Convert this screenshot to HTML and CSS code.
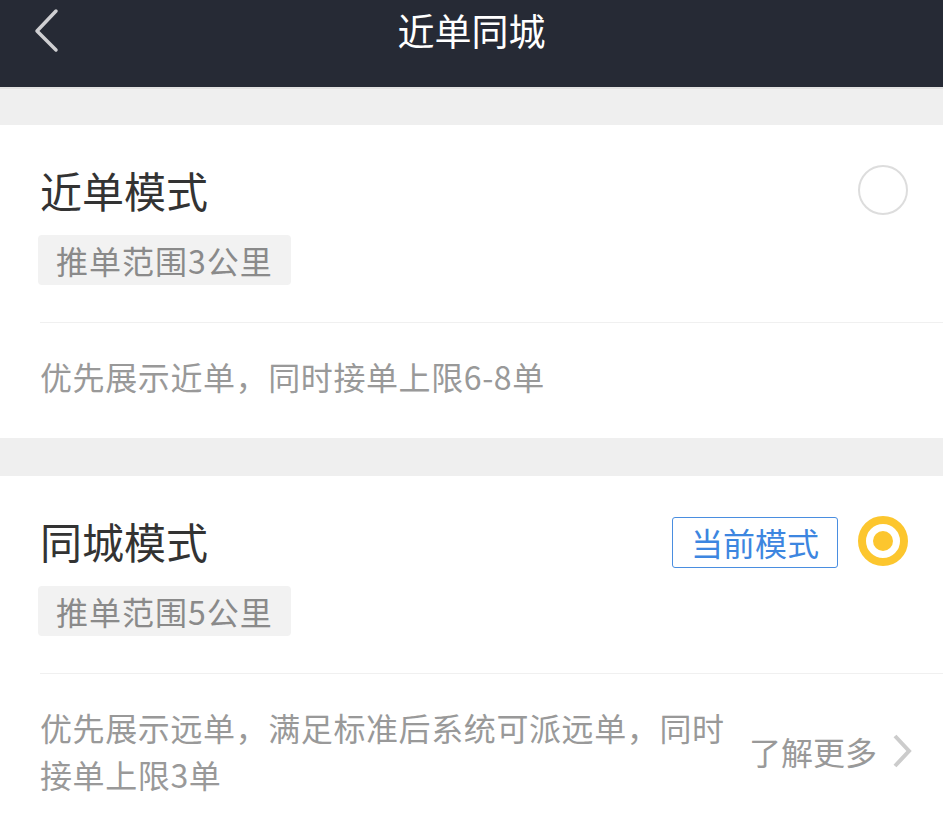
FILE: index.html
```html
<!DOCTYPE html>
<html lang="zh-CN">

<head>
 <meta charset="UTF-8">
 <meta name="viewport" content="width=device-width, initial-scale=1.0">
 <title>近单同城</title>
 <link rel="stylesheet" href="styles.css">
</head>

<body>
 <!-- Top bar -->
 <div class="topbar">
  <svg class="back" width="30" height="46" viewBox="0 0 30 46">
   <polyline points="22,4 3,24 22,43" fill="none" stroke="#cfcfd2" stroke-width="3.5" stroke-linecap="round" stroke-linejoin="round" />
  </svg>
  <div class="topbar-title">近单同城</div>
 </div>

 <div class="gap first"></div>

 <!-- Near mode -->
 <div class="card">
  <div class="card-head">
   <div class="head-row">
    <div class="mode-title">近单模式</div>
    <div class="radio"></div>
   </div>
   <div class="tag">推单范围3公里</div>
  </div>
  <div class="card-desc">
   <div class="desc-text">优先展示近单，同时接单上限6-8单</div>
  </div>
 </div>

 <div class="gap"></div>

 <!-- City mode -->
 <div class="card">
  <div class="card-head">
   <div class="head-row">
    <div class="mode-title">同城模式</div>
    <div class="current">当前模式</div>
    <div class="radio checked"></div>
   </div>
   <div class="tag">推单范围5公里</div>
  </div>
  <div class="card-desc">
   <div class="desc-text">优先展示远单，满足标准后系统可派远单，同时接单上限3单</div>
   <div class="more">
    <span>了解更多</span>
    <svg width="22" height="36" viewBox="0 0 22 36">
     <polyline points="4,3 18,18 4,33" fill="none" stroke="#cccccc" stroke-width="4" stroke-linejoin="miter" />
    </svg>
   </div>
  </div>
 </div>
</body>

</html>
```

FILE: styles.css
```css
body {
 margin: 0;
 background-color: #ffffff;
 font-family: "Noto Sans CJK SC", "Noto Sans", sans-serif;
}

.topbar {
 position: relative;
 height: 87px;
 background-color: #262a35;
 display: flex;
 justify-content: center;
}

.back {
 position: absolute;
 left: 34px;
 top: 7px;
}

.topbar-title {
 color: #ffffff;
 font-size: 37px;
 line-height: 60px;
}

.gap {
 height: 38px;
 background-color: #efefef;
}

.gap.first {
 border-top: 2px solid #e2e2e2;
 height: 36px;
}

.card {
 background-color: #ffffff;
}

.card-head {
 margin-left: 40px;
 padding: 35px 0 37px;
 border-bottom: 1px solid #f0f0f0;
}

.head-row {
 display: flex;
 align-items: center;
 height: 60px;
 padding-right: 35px;
}

.mode-title {
 flex: 1;
 font-size: 42px;
 line-height: 60px;
 color: #333333;
}

.radio {
 width: 46px;
 height: 46px;
 border: 2px solid #dddddd;
 border-radius: 50%;
}

.radio.checked {
 width: 34px;
 height: 34px;
 border: 8px solid #fcc62e;
 position: relative;
}

.radio.checked::after {
 content: "";
 position: absolute;
 left: 7px;
 top: 7px;
 width: 20px;
 height: 20px;
 border-radius: 50%;
 background-color: #fcc62e;
}

.current {
 margin-right: 20px;
 margin-top: 2px;
 height: 49px;
 padding: 0 18px;
 border: 1px solid #4a8ee0;
 border-radius: 3px;
 color: #3d86e0;
 font-size: 32px;
 line-height: 49px;
}

.tag {
 width: fit-content;
 margin-top: 15px;
 margin-left: -2px;
 padding: 0 18px;
 height: 50px;
 line-height: 50px;
 font-size: 32px;
 letter-spacing: 1px;
 color: #8a8a8a;
 background-color: #f2f2f2;
 border-radius: 4px;
}

.card-desc {
 display: flex;
 align-items: center;
 gap: 20px;
 padding: 30px 30px 38px 40px;
}

.desc-text {
 flex: 1;
 font-size: 32px;
 line-height: 47px;
 letter-spacing: 0.6px;
 color: #999999;
}

.more {
 display: flex;
 align-items: center;
 gap: 14px;
 font-size: 32px;
 color: #999999;
}
```
